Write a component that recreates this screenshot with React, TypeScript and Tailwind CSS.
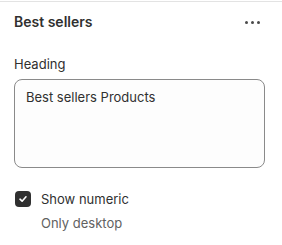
import React from "react";

export default function App() {
  return (
    <div className="w-[282px] h-[245px] bg-white" style={{ fontFamily: "Inter, 'Noto Sans', sans-serif" }}>
      <div className="h-px mt-px bg-[#e3e3e3]" />
      <div className="flex items-center justify-between pl-[14px] pr-[22px] h-[40px]">
        <span className="text-[14px] font-semibold text-[#303030] leading-none">Best sellers</span>
        <div className="flex gap-[3px] items-center">
          <span className="w-[3px] h-[3px] rounded-full bg-[#4a4a4a]" />
          <span className="w-[3px] h-[3px] rounded-full bg-[#4a4a4a]" />
          <span className="w-[3px] h-[3px] rounded-full bg-[#4a4a4a]" />
        </div>
      </div>
      <div className="px-[14px] pt-[14px]">
        <div className="text-[13px] text-[#303030] leading-[16px]">Heading</div>
        <div className="mt-[7px] w-[251px] h-[89px] rounded-[8px] border border-[#8a8a8a] bg-[#fdfdfd] px-[11px] pt-[9px] text-[13px] text-[#303030] leading-[16px]">
          Best sellers Products
        </div>
        <div className="mt-[22px] flex items-start gap-[10px] pl-px">
          <div className="w-[16px] h-[16px] rounded-[4px] bg-[#303030] flex items-center justify-center mt-[1px]">
            <svg width="10" height="10" viewBox="0 0 10 10" fill="none">
              <path d="M2 5.2 L4.1 7.2 L8 2.8" stroke="white" strokeWidth="1.6" strokeLinecap="round" strokeLinejoin="round" />
            </svg>
          </div>
          <div className="flex flex-col">
            <span className="text-[13px] text-[#303030] leading-[18px]">Show numeric</span>
            <span className="text-[13px] text-[#616161] leading-[18px] mt-[6px]">Only desktop</span>
          </div>
        </div>
      </div>
    </div>
  );
}
